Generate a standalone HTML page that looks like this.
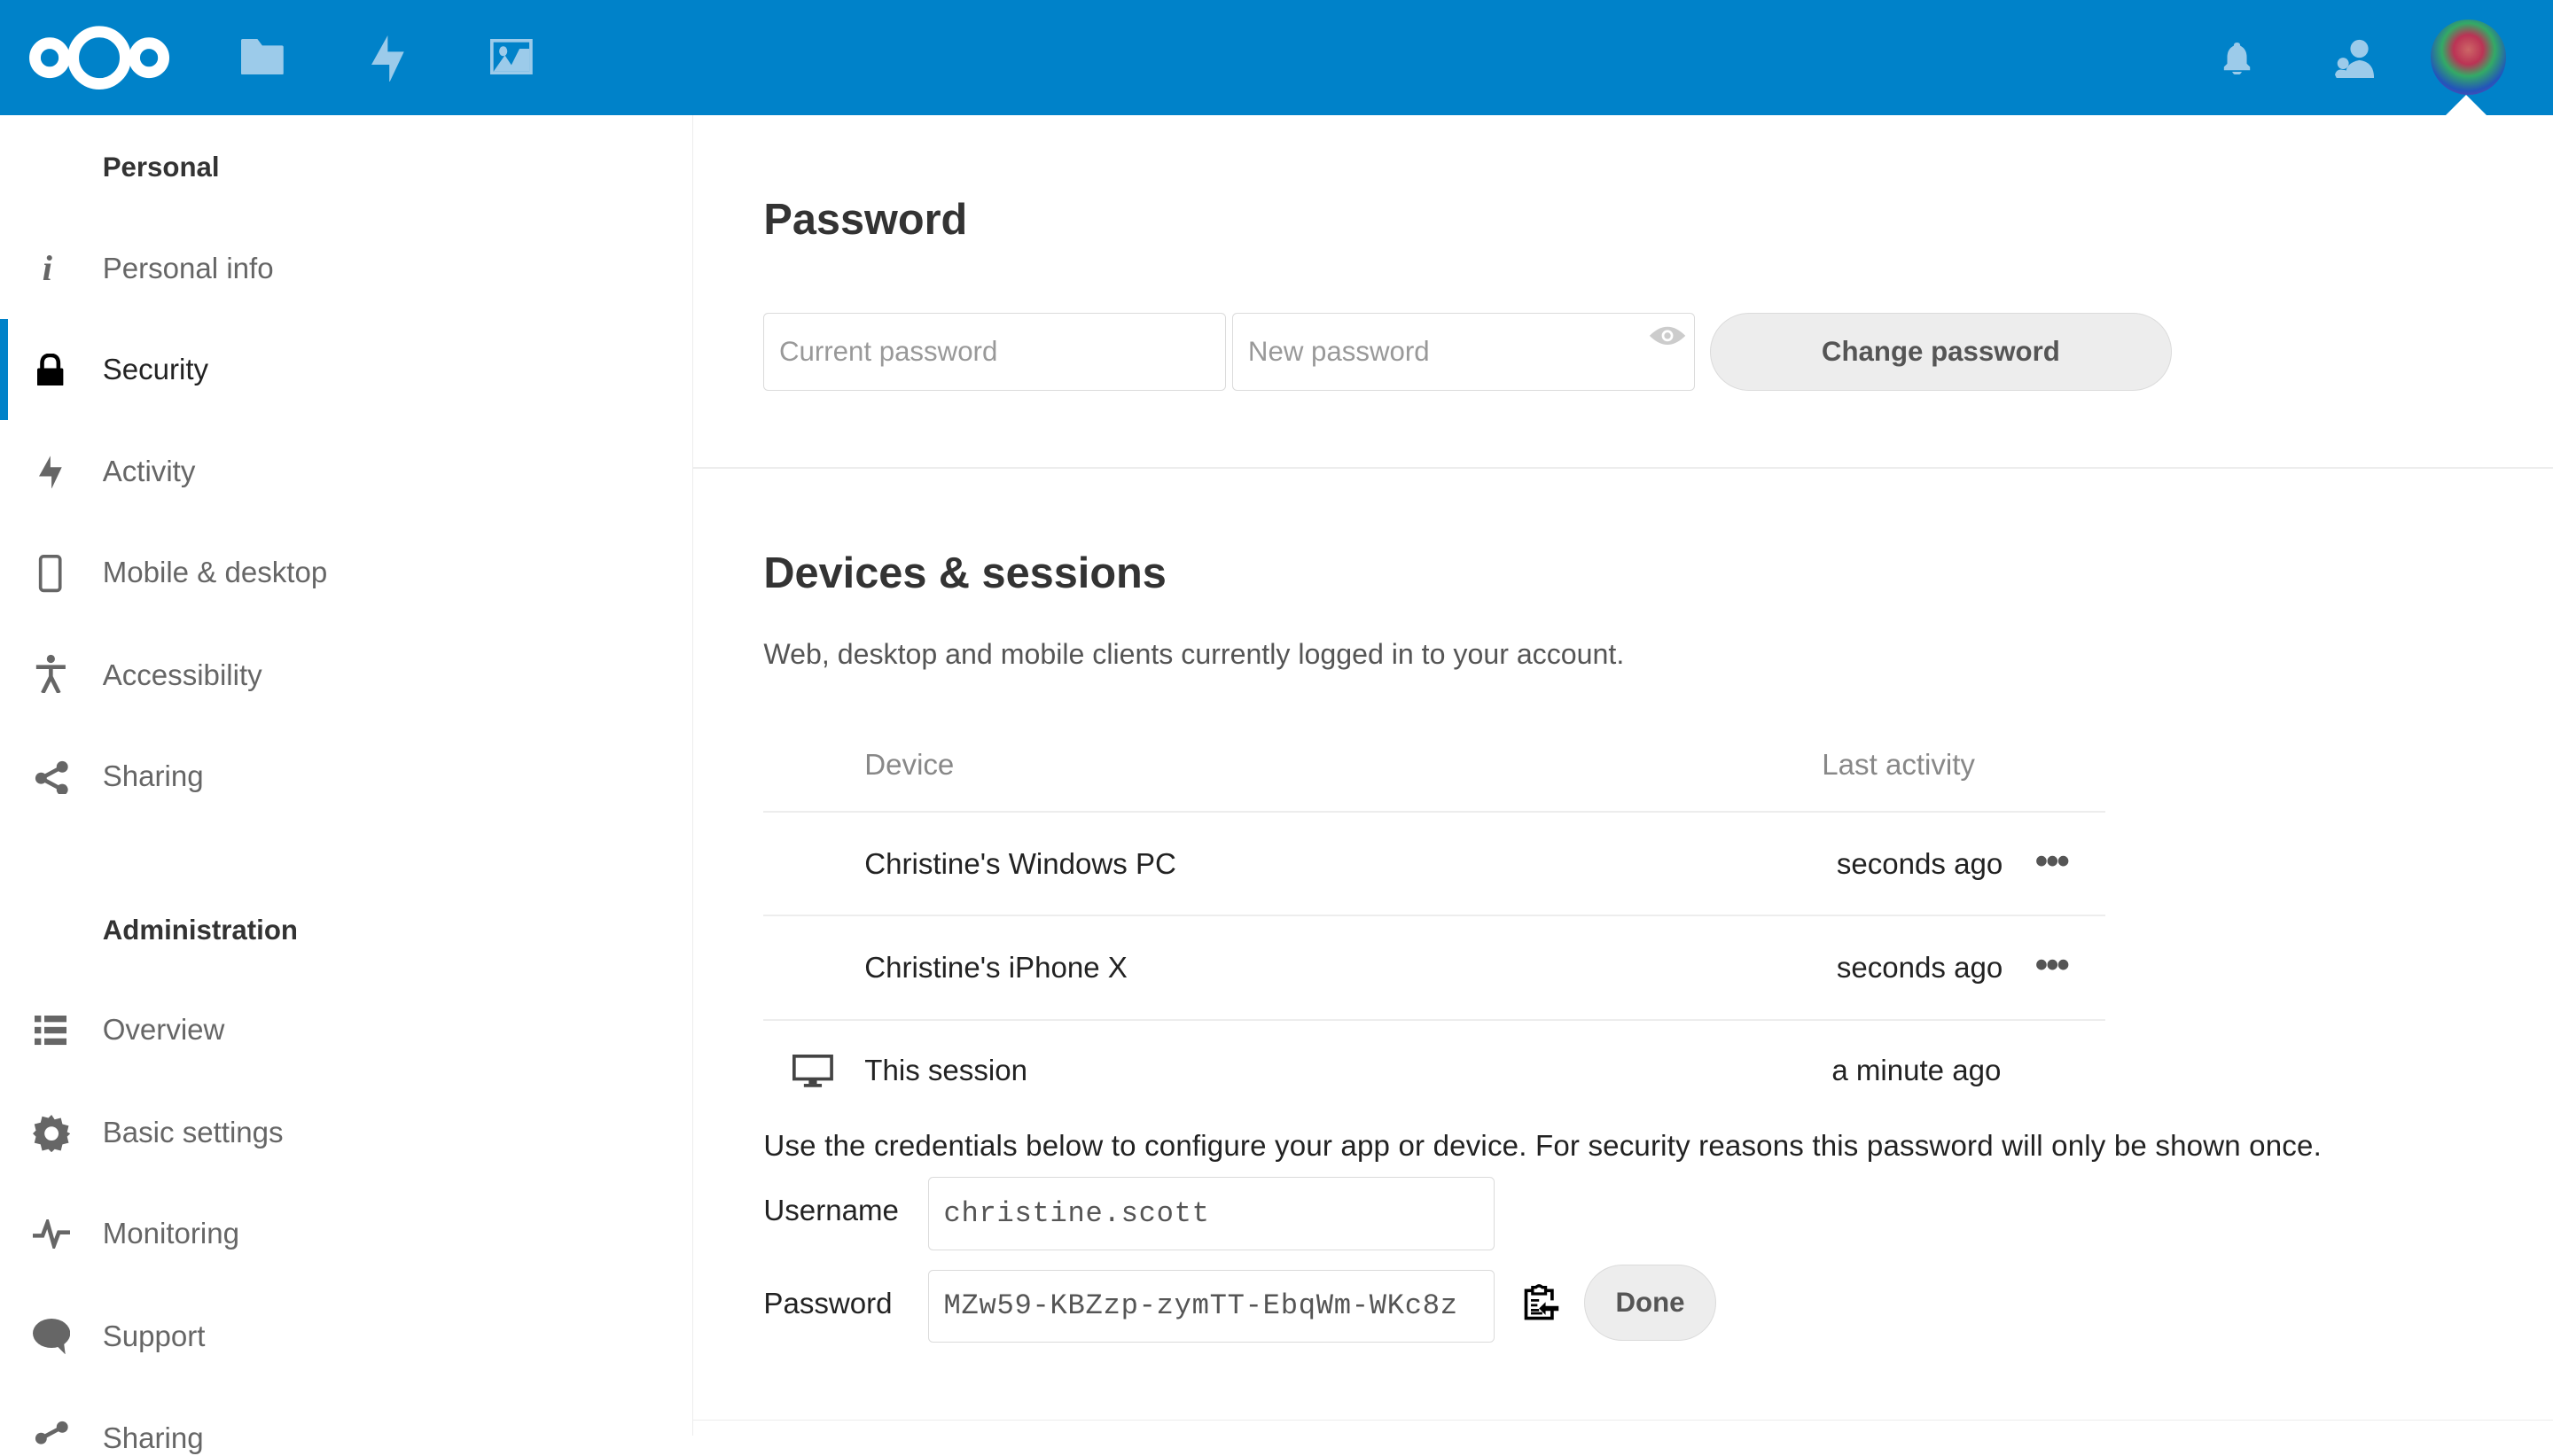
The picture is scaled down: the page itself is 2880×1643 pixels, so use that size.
<!DOCTYPE html>
<html><head><meta charset="utf-8"><style>
html,body{margin:0;padding:0;}
body{width:1568px;height:882px;zoom:1.836735;overflow:hidden;position:relative;font-family:"Liberation Sans",sans-serif;background:#fff;color:#222;}
.a{position:absolute;}
#hdr{left:0;top:0;width:1568px;height:71px;background:#0082c9;}
#side{left:0;top:71px;width:425px;height:811px;border-right:1px solid #ededed;}
.cap{left:63px;font-weight:bold;font-size:17px;color:#333;}
.it{left:63px;font-size:18px;color:#666;}
.h2{font-size:26.5px;font-weight:bold;color:#333;}
.inp{border:1px solid #dbdbdb;border-radius:3px;box-sizing:border-box;font-size:17px;color:#999;padding-left:9px;display:flex;align-items:center;}
.btn{background:#ededed;border:1px solid #dbdbdb;border-radius:30px;box-sizing:border-box;font-weight:bold;font-size:17px;color:#555;display:flex;align-items:center;justify-content:center;}
.t{font-size:18px;color:#222;}
.hr{height:1px;background:#ededed;}
.dots{font-size:22px;color:#555;letter-spacing:-1px;font-weight:bold;}
.mono{font-family:"Liberation Mono",monospace;color:#555;font-size:17.5px;letter-spacing:0.4px;}
</style></head><body>
<div id="hdr" class="a">
<svg class="a" style="left:0;top:0" width="110" height="71" viewBox="0 0 110 71"><g fill="none" stroke="#fff" stroke-width="7"><circle cx="30.5" cy="35.5" r="9"/><circle cx="61" cy="35.5" r="16"/><circle cx="91.5" cy="35.5" r="9"/></g></svg>
<svg class="a" style="left:148px;top:24px" width="26" height="22" viewBox="0 0 26 22"><path d="M0 1 Q0 0 1 0 H10 L13 4 H25 Q26 4 26 5 V21 Q26 22 25 22 H1 Q0 22 0 21Z" fill="#9ccbea"/></svg>
<svg class="a" style="left:228px;top:22px" width="20" height="28" viewBox="0 0 20 28"><path d="M10 0 L10 10 L20 10 L11 29 L11 18 L0 18 Z" fill="#9ccbea"/></svg>
<svg class="a" style="left:301px;top:24px" width="26" height="22" viewBox="0 0 26 22"><rect x="1" y="1" width="24" height="20" fill="none" stroke="#9ccbea" stroke-width="2"/><ellipse cx="8" cy="7.5" rx="2.5" ry="3" fill="#9ccbea"/><path d="M2 20 L9 10 L13 16 L18 6 L24 6 V20Z" fill="#9ccbea"/></svg>
<svg class="a" style="left:1365px;top:26px" width="18" height="20" viewBox="0 0 18 20"><path d="M9 0 Q11 0 11 2 Q15 4 15 9 V13 L17 15 V17 H1 V15 L3 13 V9 Q3 4 7 2 Q7 0 9 0Z M6 18 H12 Q11 20 9 20 Q7 20 6 18Z" fill="#9ccbea"/></svg>
<svg class="a" style="left:1434px;top:24px" width="24" height="24" viewBox="0 0 24 24"><circle cx="15" cy="6" r="5.5" fill="#9ccbea"/><path d="M7 24 Q5 15 15 13 Q24 14 24 24Z" fill="#9ccbea"/><circle cx="5" cy="15" r="3.5" fill="#9ccbea"/><path d="M0 22 Q1 18 5 19 Q9 19 9 24 H1Z" fill="#9ccbea"/></svg>
<div class="a" style="left:1493px;top:12px;width:46px;height:46px;border-radius:50%;background:radial-gradient(circle at 50% 40%,#c66 0%,#b35 25%,#3a6 45%,#25b 70%,#a3a 100%);"></div>
<div class="a" style="left:1502px;top:58px;width:0;height:0;border-left:13px solid transparent;border-right:13px solid transparent;border-bottom:13px solid #fff;"></div>
</div>
<div id="side" class="a"></div>
<div class="a" style="left:0;top:196px;width:5px;height:62px;background:#0082c9"></div>
<div class="a cap" style="top:93px">Personal</div>
<div class="a it" style="top:155px">Personal info</div>
<div class="a it" style="top:217px;color:#222">Security</div>
<div class="a it" style="top:280px">Activity</div>
<div class="a it" style="top:342px">Mobile &amp; desktop</div>
<div class="a it" style="top:405px">Accessibility</div>
<div class="a it" style="top:467px">Sharing</div>
<div class="a cap" style="top:562px">Administration</div>
<div class="a it" style="top:623px">Overview</div>
<div class="a it" style="top:686px">Basic settings</div>
<div class="a it" style="top:748px">Monitoring</div>
<div class="a it" style="top:811px">Support</div>
<div class="a it" style="top:874px">Sharing</div>
<div class="a" style="left:26px;top:152px;font:italic bold 22px 'Liberation Serif',serif;color:#666">i</div>
<svg class="a" style="left:23px;top:217px" width="16" height="20" viewBox="0 0 16 20"><path d="M3 9 V6 Q3 1 8 1 Q13 1 13 6 V9" fill="none" stroke="#000" stroke-width="2.5"/><rect x="0" y="9" width="16" height="11" rx="1" fill="#000"/></svg>
<svg class="a" style="left:24px;top:280px" width="14" height="20" viewBox="0 0 20 28"><path d="M10 0 L10 10 L20 10 L11 29 L11 18 L0 18 Z" fill="#666"/></svg>
<svg class="a" style="left:23px;top:341px" width="16" height="23" viewBox="0 0 16 23"><rect x="2" y="1" width="12" height="21" rx="2" fill="none" stroke="#666" stroke-width="2"/></svg>
<svg class="a" style="left:21px;top:402px" width="20" height="24" viewBox="0 0 20 24"><circle cx="10" cy="3" r="2.5" fill="#666"/><path d="M1 8 H19 M10 8 V14 M10 14 L5 24 M10 14 L15 24" stroke="#666" stroke-width="2.5" fill="none"/></svg>
<svg class="a" style="left:21px;top:467px" width="21" height="21" viewBox="0 0 21 21"><circle cx="17" cy="4" r="3.5" fill="#666"/><circle cx="4" cy="11" r="3.5" fill="#666"/><circle cx="17" cy="18" r="3.5" fill="#666"/><path d="M17 4 L4 11 L17 18" stroke="#666" stroke-width="2.5" fill="none"/></svg>
<svg class="a" style="left:21px;top:624px" width="20" height="19" viewBox="0 0 20 19"><g fill="#666"><rect x="0" y="0" width="4" height="4"/><rect x="0" y="7" width="4" height="4"/><rect x="0" y="14" width="4" height="4"/><rect x="6" y="0" width="14" height="4"/><rect x="6" y="7" width="14" height="4"/><rect x="6" y="14" width="14" height="4"/></g></svg>
<svg class="a" style="left:20px;top:685px" width="23" height="23" viewBox="0 0 24 24"><path d="M12 0 L14 3 L18 2 L19 6 L23 7 L22 11 L24 12 L22 14 L23 18 L19 19 L18 23 L14 22 L12 24 L10 22 L6 23 L5 19 L1 18 L2 14 L0 12 L2 10 L1 6 L5 5 L6 1 L10 2Z" fill="#666"/><circle cx="12" cy="12" r="4.5" fill="#fff"/></svg>
<svg class="a" style="left:20px;top:749px" width="23" height="18" viewBox="0 0 23 18"><path d="M0 10 H6 L9 2 L13 16 L16 8 H23" stroke="#666" stroke-width="2.5" fill="none"/></svg>
<svg class="a" style="left:20px;top:810px" width="23" height="22" viewBox="0 0 23 22"><ellipse cx="11.5" cy="9" rx="11.5" ry="9" fill="#666"/><path d="M14 16 L20 22 L19 14Z" fill="#666"/></svg>
<svg class="a" style="left:21px;top:873px" width="21" height="21" viewBox="0 0 21 21"><circle cx="17" cy="4" r="3.5" fill="#666"/><circle cx="4" cy="11" r="3.5" fill="#666"/><path d="M17 4 L4 11" stroke="#666" stroke-width="2.5"/></svg>

<div class="a h2" style="left:469px;top:120px">Password</div>
<div class="a inp" style="left:469px;top:192px;width:284px;height:48px">Current password</div>
<div class="a inp" style="left:757px;top:192px;width:284px;height:48px">New password</div>
<svg class="a" style="left:1012px;top:199px" width="24" height="14" viewBox="0 0 24 14"><path d="M1 7 Q12 -4 23 7 Q12 18 1 7Z" fill="#ccc"/><circle cx="12" cy="7" r="3.5" fill="#fff"/><circle cx="12" cy="7" r="2" fill="#ccc"/></svg>
<div class="a btn" style="left:1050px;top:192px;width:284px;height:48px">Change password</div>
<div class="a hr" style="left:426px;top:287px;width:1142px"></div>
<div class="a h2" style="left:469px;top:337px">Devices &amp; sessions</div>
<div class="a t" style="left:469px;top:392px;color:#555;font-size:17.5px">Web, desktop and mobile clients currently logged in to your account.</div>
<div class="a t" style="left:531px;top:460px;color:#888">Device</div>
<div class="a t" style="left:1119px;top:460px;color:#888">Last activity</div>
<div class="a hr" style="left:469px;top:498px;width:824px"></div>
<div class="a t" style="left:531px;top:521px">Christine's Windows PC</div>
<div class="a t" style="left:1128px;top:521px">seconds ago</div>
<div class="a dots" style="left:1250px;top:516px">•••</div>
<div class="a hr" style="left:469px;top:562px;width:824px"></div>
<div class="a t" style="left:531px;top:585px">Christine's iPhone X</div>
<div class="a t" style="left:1128px;top:585px">seconds ago</div>
<div class="a dots" style="left:1250px;top:580px">•••</div>
<div class="a hr" style="left:469px;top:626px;width:824px"></div>
<svg class="a" style="left:487px;top:648px" width="25" height="21" viewBox="0 0 25 21"><rect x="1" y="1" width="23" height="14" fill="none" stroke="#444" stroke-width="2"/><rect x="10" y="15" width="5" height="3" fill="#444"/><rect x="7" y="18" width="11" height="2" fill="#444"/></svg>
<div class="a t" style="left:531px;top:648px">This session</div>
<div class="a t" style="left:1125px;top:648px">a minute ago</div>
<div class="a t" style="left:469px;top:694px;letter-spacing:0.1px">Use the credentials below to configure your app or device. For security reasons this password will only be shown once.</div>
<div class="a t" style="left:469px;top:734px">Username</div>
<div class="a inp mono" style="left:570px;top:723px;width:348px;height:45px">christine.scott</div>
<div class="a t" style="left:469px;top:791px">Password</div>
<div class="a inp mono" style="left:570px;top:780px;width:348px;height:45px">MZw59-KBZzp-zymTT-EbqWm-WKc8z</div>
<svg class="a" style="left:934px;top:789px" width="24" height="22" viewBox="0 0 24 22"><path d="M7 4 H3 V21 H19 V15 M19 10 V4 H15" fill="none" stroke="#000" stroke-width="2"/><path d="M7 2 H9 Q11 0 13 2 H15 V6 H7Z" fill="none" stroke="#000" stroke-width="1.8"/><path d="M6 10 H11 M6 13 H10 M6 16 H11 M6 18 H13" stroke="#000" stroke-width="1.5"/><path d="M11 15 L15 11 V13.5 H23 V16.5 H15 V19Z" fill="#000"/></svg>
<div class="a btn" style="left:973px;top:777px;width:81px;height:47px">Done</div>
<div class="a hr" style="left:426px;top:872px;width:1142px"></div>
</body></html>
